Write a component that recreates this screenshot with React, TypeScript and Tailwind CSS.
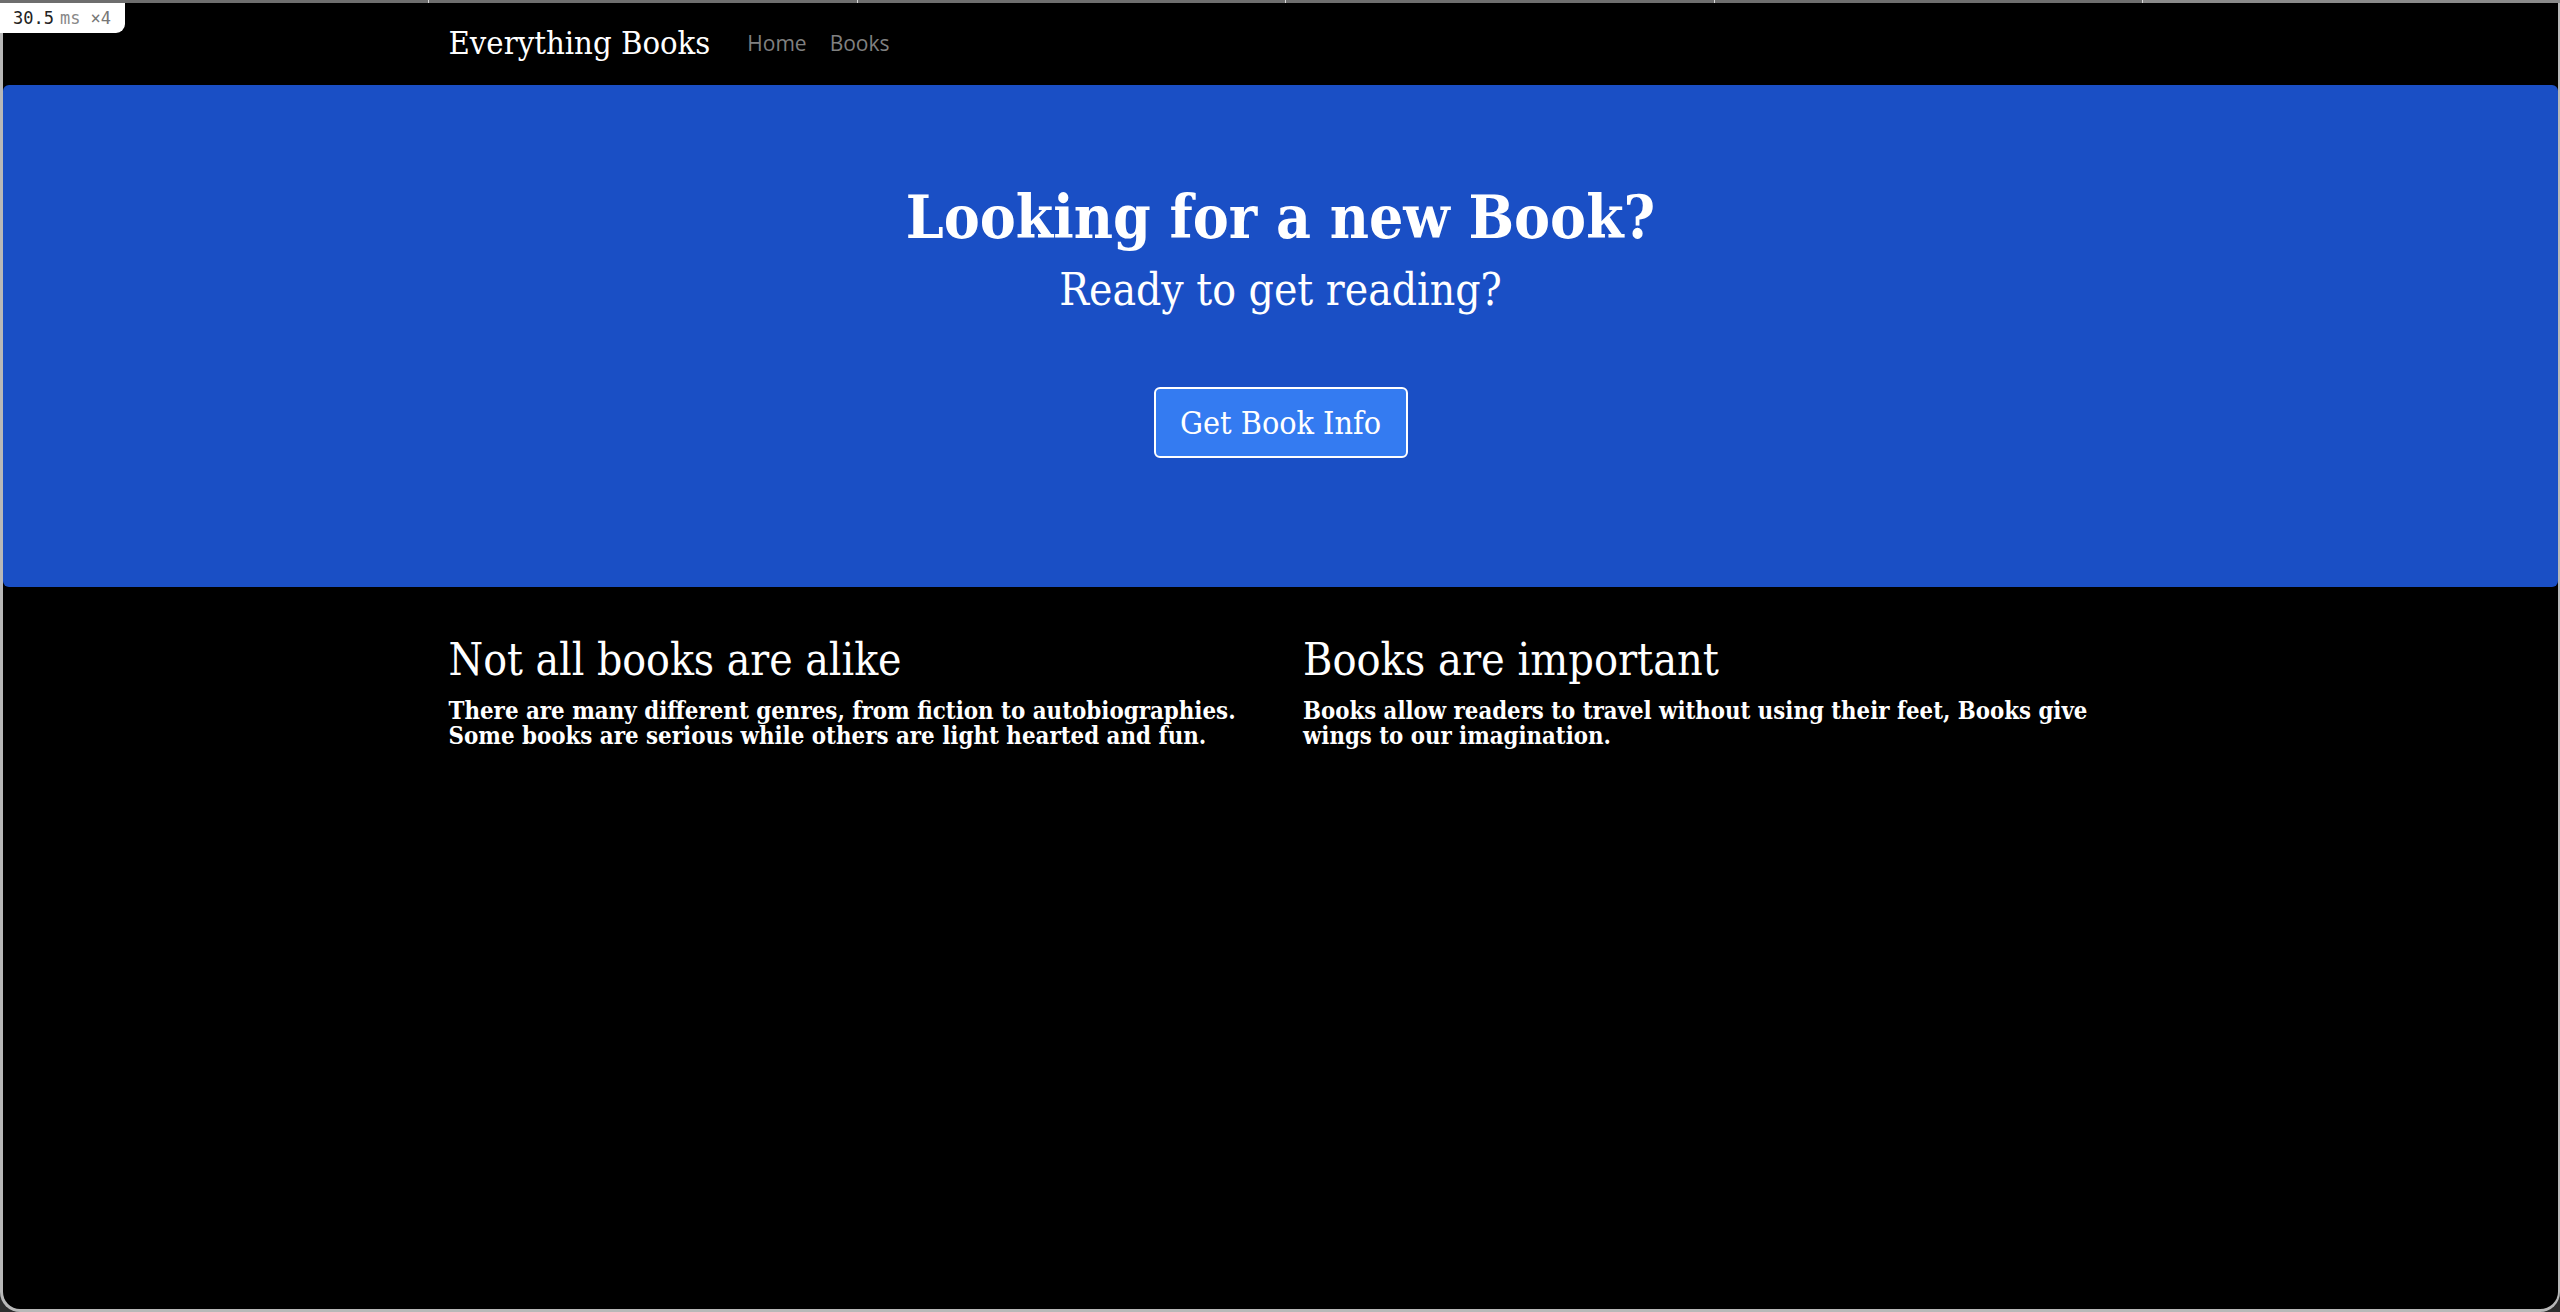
import React from "react";

const serif = "font-['DejaVu_Serif',serif] [font-stretch:condensed]";

export default function App() {
  return (
    <div className="relative h-[1312px] w-full overflow-hidden bg-[#2e2e2e]">
      {/* top strip */}
      <div className="relative h-[3px] w-full bg-[#6e6e6e]">
        <div className="absolute right-0 top-0 h-[3px] w-[418px] bg-[#8a8a8a]" />
        <div className="absolute left-[428px] top-0 h-[3px] w-px bg-[#d8d8d8]" />
        <div className="absolute left-[857px] top-0 h-[3px] w-px bg-[#d8d8d8]" />
        <div className="absolute left-[1285px] top-0 h-[3px] w-px bg-[#d8d8d8]" />
        <div className="absolute left-[1714px] top-0 h-[3px] w-px bg-[#d8d8d8]" />
        <div className="absolute left-[2142px] top-0 h-[3px] w-px bg-[#d8d8d8]" />
      </div>

      <div className="h-[1309px] rounded-b-[20px] border-b-[3px] border-l-[3px] border-r-[2px] border-[#b8b8b8] bg-black">
        {/* nav */}
        <nav className="h-[82px]">
          <div className="mx-auto flex h-full w-[1710px] items-center px-[23px] pb-[2px]">
            <span className={`${serif} text-[32.5px] leading-[38px] text-white`}>Everything Books</span>
            <div className="ml-[37px] flex gap-[23px] font-['Open_Sans',sans-serif] text-[21px] leading-[30px] text-[#808080]">
              <span>Home</span>
              <span>Books</span>
            </div>
          </div>
        </nav>

        {/* hero */}
        <section className="rounded-[6px] bg-[#1a4fc5] pb-[129px] pt-[94px] text-center text-white">
          <h1 className={`${serif} text-[60px] font-bold leading-[77px]`}>Looking for a new Book?</h1>
          <p className={`${serif} mt-[9px] text-[44px] leading-[50px]`}>Ready to get reading?</p>
          <div className="mt-[72px] flex justify-center">
            <button className={`${serif} flex h-[71px] w-[254px] items-center justify-center rounded-[6px] border-[2px] border-white bg-[#347bf1] text-[32px] leading-[38px] text-white`}>
              Get Book Info
            </button>
          </div>
        </section>

        {/* content */}
        <section className="mx-auto mt-[48px] grid w-[1710px] grid-cols-2 gap-[45px] px-[23px] text-white">
          <div>
            <h3 className={`${serif} text-[44px] leading-[50px]`}>Not all books are alike</h3>
            <p className={`${serif} mt-[14px] text-[23.8px] font-bold leading-[25px]`}>
              There are many different genres, from fiction to autobiographies. Some books are serious while others are light hearted and fun.
            </p>
          </div>
          <div>
            <h3 className={`${serif} text-[44.5px] leading-[50px]`}>Books are important</h3>
            <p className={`${serif} mt-[14px] text-[23.7px] font-bold leading-[25px]`}>
              Books allow readers to travel without using their feet, Books give wings to our imagination.
            </p>
          </div>
        </section>
      </div>

      {/* timing badge */}
      <div className="absolute left-0 top-[3px] flex h-[30px] w-[125px] items-center gap-[6px] rounded-br-[9px] bg-white pl-[13px] font-['DejaVu_Sans_Mono',monospace] text-[17px] leading-none">
        <span className="text-[#222]">30.5</span>
        <span className="text-[#888]">ms</span>
        <span className="ml-[4px] text-[#777]">×4</span>
      </div>
    </div>
  );
}
